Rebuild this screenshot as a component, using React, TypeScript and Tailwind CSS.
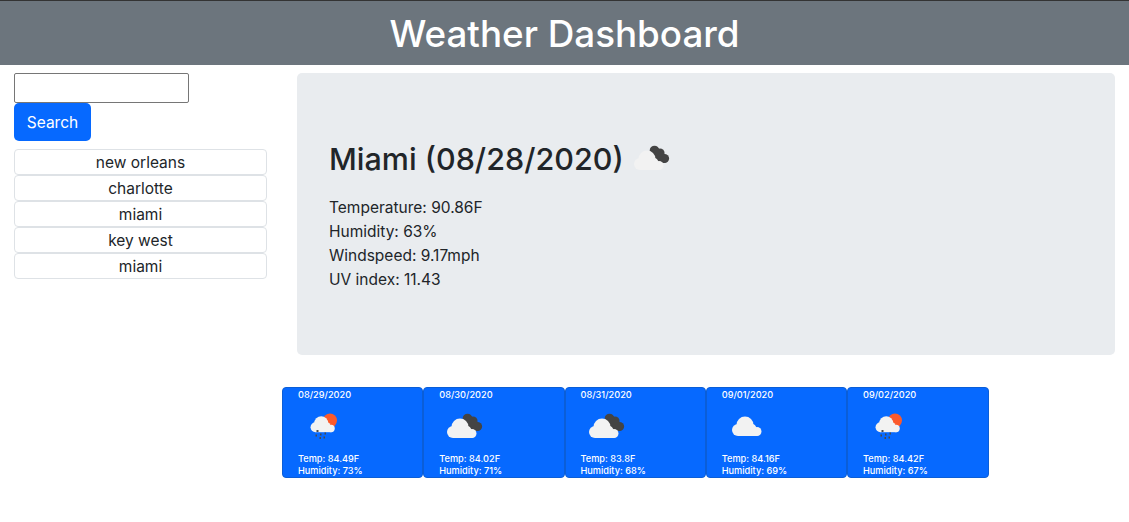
const fontClass = "font-['Inter','Liberation_Sans',sans-serif]"

function Cloud({ fill = '#f2f2f2' }: { fill?: string }) {
  return (
    <g fill={fill}>
      <circle cx="14" cy="29" r="6" />
      <circle cx="21" cy="24" r="8.5" />
      <circle cx="27" cy="28" r="5.5" />
      <circle cx="33" cy="30.5" r="4.5" />
      <rect x="14" y="28" width="19.5" height="7" />
    </g>
  )
}

function BrokenClouds() {
  return (
    <svg viewBox="0 0 50 50" className="w-[50px] h-[50px] shrink-0">
      <g fill="#444444">
        <circle cx="28.5" cy="16.5" r="4.8" />
        <circle cx="34" cy="19" r="4.6" />
        <circle cx="38.5" cy="24.5" r="4.6" />
        <path d="M24 18 L30 13 L43 24 L39 29 L30 29 Z" />
      </g>
      <g transform="translate(0 1)">
        <Cloud />
      </g>
    </svg>
  )
}

function PlainCloud() {
  return (
    <svg viewBox="0 0 50 50" className="w-[50px] h-[50px] shrink-0">
      <g transform="translate(2 -1)">
        <Cloud />
      </g>
    </svg>
  )
}

function SunRain() {
  return (
    <svg viewBox="0 0 50 50" className="w-[50px] h-[50px] shrink-0">
      <circle cx="32" cy="18.5" r="7" fill="#fb5a2c" />
      <g transform="translate(6 1.5) scale(0.82)">
        <Cloud />
      </g>
      <g fill="#4a4a4a">
        <rect x="18.5" y="28" width="2" height="2" />
        <rect x="17.5" y="32.5" width="1.5" height="2" />
        <rect x="22" y="31.5" width="1.5" height="2" />
        <rect x="21.5" y="35" width="1.5" height="2" />
        <rect x="26.5" y="30.5" width="1.5" height="2" />
        <rect x="25.5" y="34.5" width="1.5" height="2" />
      </g>
    </svg>
  )
}

const history = ['new orleans', 'charlotte', 'miami', 'key west', 'miami']

const forecast = [
  { date: '08/29/2020', icon: <SunRain />, temp: '84.49F', humidity: '73%' },
  { date: '08/30/2020', icon: <BrokenClouds />, temp: '84.02F', humidity: '71%' },
  { date: '08/31/2020', icon: <BrokenClouds />, temp: '83.8F', humidity: '68%' },
  { date: '09/01/2020', icon: <PlainCloud />, temp: '84.16F', humidity: '69%' },
  { date: '09/02/2020', icon: <SunRain />, temp: '84.42F', humidity: '67%' },
]

export default function App() {
  return (
    <div className={`${fontClass} min-h-[522px] bg-white text-[#212529] text-base`}>
      <header className="h-[65px] bg-[#6c757d] border-t border-[#333] pt-[3px] flex items-center justify-center">
        <h1 className="text-[36.8px] font-medium text-white leading-none">Weather Dashboard</h1>
      </header>

      <div className="flex pt-2">
        <aside className="w-[282px] pl-[14px] pr-[15px] shrink-0">
          <input
            type="text"
            className="block w-[175px] h-[30px] border border-[#767676] rounded-[2px] bg-white"
          />
          <button className="block h-[38px] w-[77px] pt-[2px] rounded-[5px] bg-[#0669ff] text-white text-[15.5px]">
            Search
          </button>
          <ul className="mt-2">
            {history.map((city, i) => (
              <li
                key={i}
                className="h-[26px] pt-[2px] border border-[#dee2e6] rounded-[4px] flex items-center justify-center text-[15.5px]"
              >
                {city}
              </li>
            ))}
          </ul>
        </aside>

        <main className="flex-1 pl-[15px] pr-[14px]">
          <section className="h-[282px] bg-[#e9ecef] rounded-[5px] pl-8 pt-[61px]">
            <div className="flex items-center h-[50px]">
              <h2 className="text-[30.5px] font-medium leading-none mr-[2px]">Miami (08/28/2020)</h2>
              <BrokenClouds />
            </div>
            <div className="mt-[12px] text-[15.5px] leading-6">
              <p>Temperature: 90.86F</p>
              <p>Humidity: 63%</p>
              <p>Windspeed: 9.17mph</p>
              <p>UV index: 11.43</p>
            </div>
          </section>
        </main>
      </div>

      <div className="ml-[282px] mt-8 flex w-[707px]">
        {forecast.map((day) => (
          <div
            key={day.date}
            className="w-[141.25px] last:flex-1 min-w-0 h-[91px] bg-[#0669ff] border border-[#0b5ed7] rounded-[4px] text-white text-[9.2px] font-medium leading-[12px] pl-[15px] pt-[1px]"
          >
            <p>{day.date}</p>
            <div className="h-[50px] mt-[1px]">{day.icon}</div>
            <p className="mt-[1px]">Temp: {day.temp}</p>
            <p>Humidity: {day.humidity}</p>
          </div>
        ))}
      </div>
    </div>
  )
}
